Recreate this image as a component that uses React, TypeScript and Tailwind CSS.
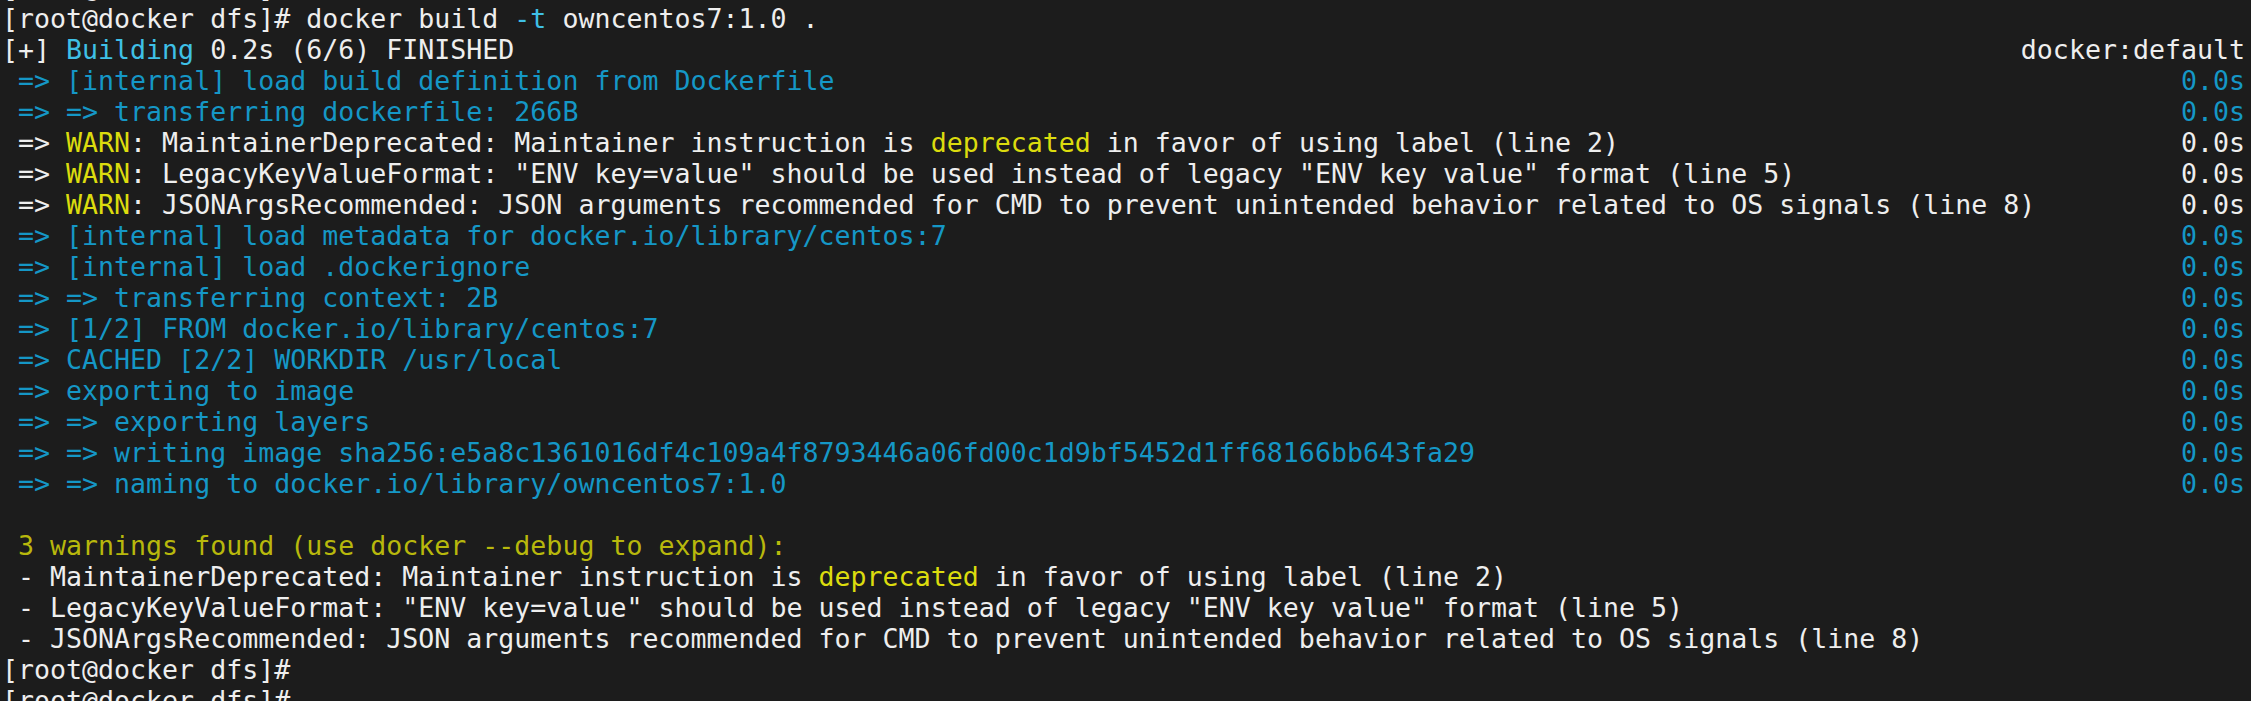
type Seg = [string, string?];
type Line = { left: Seg[]; right?: Seg };

const W = "text-[#eeeeee]";
const C = "text-[#3fc0e6]";
const B = "text-[#1597c6]";
const Y = "text-[#dcdc0e]";
const D = "text-[#b8b80c]";

const prompt: Line = { left: [["[root@docker dfs]#", W]] };

const lines: Line[] = [
  prompt,
  {
    left: [
      ["[root@docker dfs]# docker build ", W],
      ["-t", C],
      [" owncentos7:1.0 .", W],
    ],
  },
  {
    left: [
      ["[+] ", W],
      ["Building", C],
      [" 0.2s (6/6) FINISHED", W],
    ],
    right: ["docker:default", W],
  },
  { left: [[" => [internal] load build definition from Dockerfile", B]], right: ["0.0s", B] },
  { left: [[" => => transferring dockerfile: 266B", B]], right: ["0.0s", B] },
  {
    left: [
      [" => ", W],
      ["WARN", Y],
      [": MaintainerDeprecated: Maintainer instruction is ", W],
      ["deprecated", Y],
      [" in favor of using label (line 2)", W],
    ],
    right: ["0.0s", W],
  },
  {
    left: [
      [" => ", W],
      ["WARN", Y],
      [': LegacyKeyValueFormat: "ENV key=value" should be used instead of legacy "ENV key value" format (line 5)', W],
    ],
    right: ["0.0s", W],
  },
  {
    left: [
      [" => ", W],
      ["WARN", Y],
      [": JSONArgsRecommended: JSON arguments recommended for CMD to prevent unintended behavior related to OS signals (line 8)", W],
    ],
    right: ["0.0s", W],
  },
  { left: [[" => [internal] load metadata for docker.io/library/centos:7", B]], right: ["0.0s", B] },
  { left: [[" => [internal] load .dockerignore", B]], right: ["0.0s", B] },
  { left: [[" => => transferring context: 2B", B]], right: ["0.0s", B] },
  { left: [[" => [1/2] FROM docker.io/library/centos:7", B]], right: ["0.0s", B] },
  { left: [[" => CACHED [2/2] WORKDIR /usr/local", B]], right: ["0.0s", B] },
  { left: [[" => exporting to image", B]], right: ["0.0s", B] },
  { left: [[" => => exporting layers", B]], right: ["0.0s", B] },
  {
    left: [[" => => writing image sha256:e5a8c1361016df4c109a4f8793446a06fd00c1d9bf5452d1ff68166bb643fa29", B]],
    right: ["0.0s", B],
  },
  { left: [[" => => naming to docker.io/library/owncentos7:1.0", B]], right: ["0.0s", B] },
  { left: [[" ", W]] },
  { left: [[" 3 warnings found (use docker --debug to expand):", D]] },
  {
    left: [
      [" - MaintainerDeprecated: Maintainer instruction is ", W],
      ["deprecated", Y],
      [" in favor of using label (line 2)", W],
    ],
  },
  { left: [[' - LegacyKeyValueFormat: "ENV key=value" should be used instead of legacy "ENV key value" format (line 5)', W]] },
  { left: [[" - JSONArgsRecommended: JSON arguments recommended for CMD to prevent unintended behavior related to OS signals (line 8)", W]] },
  prompt,
  prompt,
];

export default function App() {
  return (
    <div className="h-[701px] w-full overflow-hidden bg-[#1c1c1c]">
      <div className="-mt-[28px] pl-[2px] pr-[6px] font-['DejaVu_Sans_Mono',monospace] text-[26.6px] leading-[31px]">
        {lines.map((line, i) => (
          <div key={i} className="flex justify-between whitespace-pre">
            <span>
              {line.left.map(([text, color], j) => (
                <span key={j} className={color}>
                  {text}
                </span>
              ))}
            </span>
            {line.right && <span className={line.right[1]}>{line.right[0]}</span>}
          </div>
        ))}
      </div>
    </div>
  );
}
